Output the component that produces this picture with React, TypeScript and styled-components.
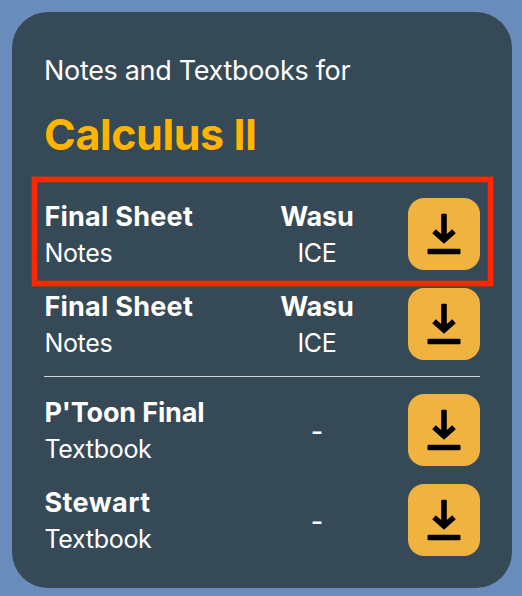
import React from "react";
import styled, { createGlobalStyle } from "styled-components";

const GlobalStyle = createGlobalStyle`
  * { box-sizing: border-box; }
  body { margin: 0; background: #698cbd; font-family: Inter, "Liberation Sans", sans-serif; }
`;

const Page = styled.main`
  width: 522px;
  height: 596px;
  padding: 12px 10px 8px 12px;
  background: #698cbd;
  overflow: hidden;
`;

const Card = styled.section`
  height: 576px;
  padding: 39px 32px 0;
  border-radius: 36px;
  background: #364956;
  color: #fff;
`;

const Subtitle = styled.p`
  margin: 0;
  height: 40px;
  font-size: 27px;
  line-height: 40px;
  letter-spacing: -0.32px;
  white-space: nowrap;
`;

const Title = styled.h1`
  margin: 11px 0 0;
  height: 64px;
  font-size: 43px;
  line-height: 64px;
  font-weight: 700;
  letter-spacing: -0.42px;
  color: #ffb400;
`;

const Group = styled.div`
  display: flex;
  flex-direction: column;
  gap: 18px;
`;

const Highlight = styled.div`
  margin: 11px -13px 2px -12px;
  height: 109px;
  padding: 16px 8px 11px 7px;
  border: 5px solid #ff2600;
  box-shadow: 0 0 0 1px rgba(255, 38, 0, 0.4), inset 0 0 0 1px rgba(255, 38, 0, 0.3);
`;

const Row = styled.div`
  display: grid;
  grid-template-columns: 182px 182px 72px;
  grid-template-rows: 72px;
  align-items: center;
  height: 72px;
`;

const Cell = styled.div<{ $center?: boolean }>`
  padding: ${(p) => (p.$center ? "2px 0 0" : "2px 0 0 0.4px")};
  text-align: ${(p) => (p.$center ? "center" : "left")};
  white-space: nowrap;
`;

const Name = styled.div<{ $tracking?: number }>`
  font-size: 27px;
  line-height: 37px;
  font-weight: 700;
  letter-spacing: ${(p) => p.$tracking ?? 0}px;
`;

const Detail = styled.div`
  font-size: 25px;
  line-height: 37px;
  letter-spacing: -0.3px;
`;

const Empty = styled.div`
  font-size: 27px;
  line-height: 37px;
  font-weight: 500;
`;

const Download = styled.button`
  display: grid;
  place-items: center;
  width: 72px;
  height: 72px;
  padding: 0;
  border: 0;
  border-radius: 16px;
  background: #f1b340;
`;

const Divider = styled.hr`
  margin: 16px 0 17px;
  height: 1px;
  border: 0;
  background: #d3d6d6;
`;

type Item = { name: string; kind: string; owner?: string; faculty?: string; tracking?: number };

function ItemRow({ name, kind, owner, faculty, tracking }: Item) {
  return (
    <Row>
      <Cell>
        <Name $tracking={tracking}>{name}</Name>
        <Detail>{kind}</Detail>
      </Cell>
      <Cell $center>
        {owner ? <Name $tracking={-0.2}>{owner}</Name> : <Empty>-</Empty>}
        {faculty && <Detail>{faculty}</Detail>}
      </Cell>
      <Download aria-label={`Download ${name}`}>
        <svg width="72" height="72" viewBox="0 0 72 72" fill="#000">
          <rect x="33.200" y="15.700" width="5.600" height="26" rx="1" />
          <path
            d="M26 33.200 36 42.100l10-8.900"
            fill="none"
            stroke="#000"
            strokeWidth="5.400"
          />
          <rect x="19.500" y="50.700" width="33" height="5.500" rx="1" />
        </svg>
      </Download>
    </Row>
  );
}

export default function App() {
  return (
    <Page>
      <GlobalStyle />
      <Card>
        <Subtitle>Notes and Textbooks for</Subtitle>
        <Title>Calculus II</Title>
        <Highlight>
          <ItemRow name="Final Sheet" kind="Notes" owner="Wasu" faculty="ICE" tracking={0.25} />
        </Highlight>
        <ItemRow name="Final Sheet" kind="Notes" owner="Wasu" faculty="ICE" tracking={0.25} />
        <Divider />
        <Group>
          <ItemRow name="P'Toon Final" kind="Textbook" tracking={-0.15} />
          <ItemRow name="Stewart" kind="Textbook" tracking={0.45} />
        </Group>
      </Card>
    </Page>
  );
}
